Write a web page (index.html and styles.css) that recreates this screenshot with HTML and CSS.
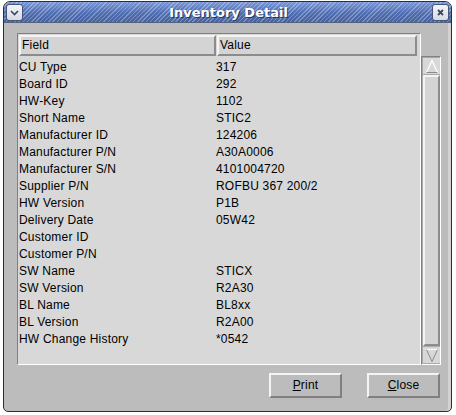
FILE: index.html
```html
<!DOCTYPE html>
<html lang="en">
<head>
    <meta charset="UTF-8">
    <title>Inventory Detail</title>
    <link rel="stylesheet" href="styles.css">
</head>
<body>

<div class="window">
    <!-- Title bar -->
    <div class="titlebar">
        <div class="tb-button">
            <svg width="11" height="11" viewBox="0 0 11 11"><path d="M2 4 L5.5 7.5 L9 4" fill="none" stroke="#3a4660" stroke-width="1.6"/></svg>
        </div>
        <div class="title">Inventory Detail</div>
        <div class="tb-button">
            <svg width="11" height="11" viewBox="0 0 11 11"><path d="M3 3 L8 8 M8 3 L3 8" fill="none" stroke="#3a4660" stroke-width="1.8"/></svg>
        </div>
    </div>

    <div class="content">
        <div class="listwrap">
            <div class="table">
                <div class="header">
                    <div class="hcell field-col">Field</div>
                    <div class="hcell value-col">Value</div>
                </div>
                <div class="rows" id="rows"></div>
            </div>
            <div class="scrollbar">
                <div class="arrow">
                    <svg width="14" height="15" viewBox="0 0 14 15"><path d="M7 1.5 L12.5 13.5 L1.5 13.5 Z" fill="#d8d8d8" stroke="#ffffff" stroke-width="1.2"/><path d="M1.5 13.5 L12.5 13.5" stroke="#8a8a8a"/></svg>
                </div>
                <div class="thumb"></div>
                <div class="arrow">
                    <svg width="14" height="15" viewBox="0 0 14 15"><path d="M1.5 1.5 L12.5 1.5 L7 13.5 Z" fill="#d8d8d8" stroke="#8a8a8a" stroke-width="1"/><path d="M1.5 1.5 L12.5 1.5" stroke="#ffffff"/></svg>
                </div>
            </div>
        </div>

        <div class="actions">
            <button class="btn"><u>P</u>rint</button>
            <button class="btn"><u>C</u>lose</button>
        </div>
    </div>
</div>

<script>
    // Inventory rows shown in the list
    const items = [
        ['CU Type', '317'],
        ['Board ID', '292'],
        ['HW-Key', '1102'],
        ['Short Name', 'STIC2'],
        ['Manufacturer ID', '124206'],
        ['Manufacturer P/N', 'A30A0006'],
        ['Manufacturer S/N', '4101004720'],
        ['Supplier P/N', 'ROFBU 367 200/2'],
        ['HW Version', 'P1B'],
        ['Delivery Date', '05W42'],
        ['Customer ID', ''],
        ['Customer P/N', ''],
        ['SW Name', 'STICX'],
        ['SW Version', 'R2A30'],
        ['BL Name', 'BL8xx'],
        ['BL Version', 'R2A00'],
        ['HW Change History', '*0542']
    ];

    const rows = document.getElementById('rows');
    items.forEach(item => {
        const row = document.createElement('div');
        row.className = 'row';
        row.innerHTML = `<div class="field-col">${item[0]}</div><div class="value-col">${item[1]}</div>`;
        rows.appendChild(row);
    });
</script>

</body>
</html>
```

FILE: styles.css
```css
body {
    margin: 0;
    padding: 0;
    background-color: #ffffff;
    font-family: "Liberation Sans", Arial, sans-serif;
    font-size: 12px;
    letter-spacing: 0.2px;
    color: #000;
}

.window {
    width: 447px;
    height: 409px;
    margin: 1px 0 0 3px;
    border: 1px solid #2e2e2e;
    border-radius: 7px 7px 5px 5px;
    background-color: #bcbcbc;
    overflow: hidden;
    display: flex;
    flex-direction: column;
    box-shadow: inset -3px 0 0 #d2d2d2;
}

/* Title bar */
.titlebar {
    height: 20px;
    display: flex;
    align-items: center;
    padding: 0 2px 0 2px;
    border-bottom: 1px solid #55627e;
    background:
        repeating-linear-gradient(135deg, rgba(255, 255, 255, 0.28) 0 1px, transparent 1px 3px),
        linear-gradient(#7a97d6, #4f6db2 55%, #46629f);
}
.title {
    flex: 1;
    text-align: center;
    color: #ffffff;
    font-family: "DejaVu Sans", sans-serif;
    font-weight: bold;
    font-size: 13px;
    letter-spacing: 0;
    text-shadow: 1px 1px 0 #24355f;
    padding-left: 2px;
}
.tb-button {
    width: 15px;
    height: 15px;
    border: 1px solid #46557a;
    border-radius: 3px;
    background: linear-gradient(#f2f4f8, #d6dbe4);
    display: flex;
    align-items: center;
    justify-content: center;
}

/* Content */
.content {
    flex: 1;
    padding: 10px 10px 0 13px;
    display: flex;
    flex-direction: column;
}
.listwrap {
    display: flex;
    height: 332px;
}
.table {
    flex: 1;
    border: 1px solid;
    border-color: #808080 #ffffff #ffffff #808080;
    background-color: #d8d8d8;
    display: flex;
    flex-direction: column;
}
.header {
    display: flex;
    padding: 1px 3px 0 1px;
}
.hcell {
    height: 17px;
    line-height: 17px;
    border: 2px solid;
    border-color: #f4f4f4 #8c8c8c #8c8c8c #f4f4f4;
    background-color: #d4d4d4;
    padding-left: 1px;
}
.header .field-col {
    width: 192px;
}
.header .value-col {
    flex: 1;
    margin-left: 1px;
}
.rows {
    flex: 1;
    padding-top: 3px;
}
.row {
    display: flex;
    height: 17px;
    line-height: 17px;
}
.row .field-col {
    width: 197px;
    padding-left: 1px;
}

/* Scrollbar */
.scrollbar {
    width: 17px;
    margin-top: 23px;
    border: 1px solid;
    border-color: #808080 #ffffff #ffffff #808080;
    background-color: #a9a9a9;
    display: flex;
    flex-direction: column;
    padding: 1px 0 1px 1px;
}
.arrow {
    height: 16px;
    display: flex;
    align-items: center;
    justify-content: center;
    background-color: #d8d8d8;
}
.thumb {
    flex: 1;
    margin: 1px 0;
    border: 2px solid;
    border-color: #f4f4f4 #8c8c8c #8c8c8c #f4f4f4;
    background-color: #d4d4d4;
}

/* Buttons */
.actions {
    display: flex;
    justify-content: flex-end;
    gap: 25px;
    margin-top: 8px;
    padding-right: 1px;
}
.btn {
    width: 73px;
    height: 25px;
    border: 2px solid;
    border-color: #f4f4f4 #808080 #808080 #f4f4f4;
    background-color: #bcbcbc;
    font-family: "Liberation Sans", Arial, sans-serif;
    font-size: 12px;
    letter-spacing: 0.2px;
    color: #000;
    padding: 0 0 1px 0;
}
```
